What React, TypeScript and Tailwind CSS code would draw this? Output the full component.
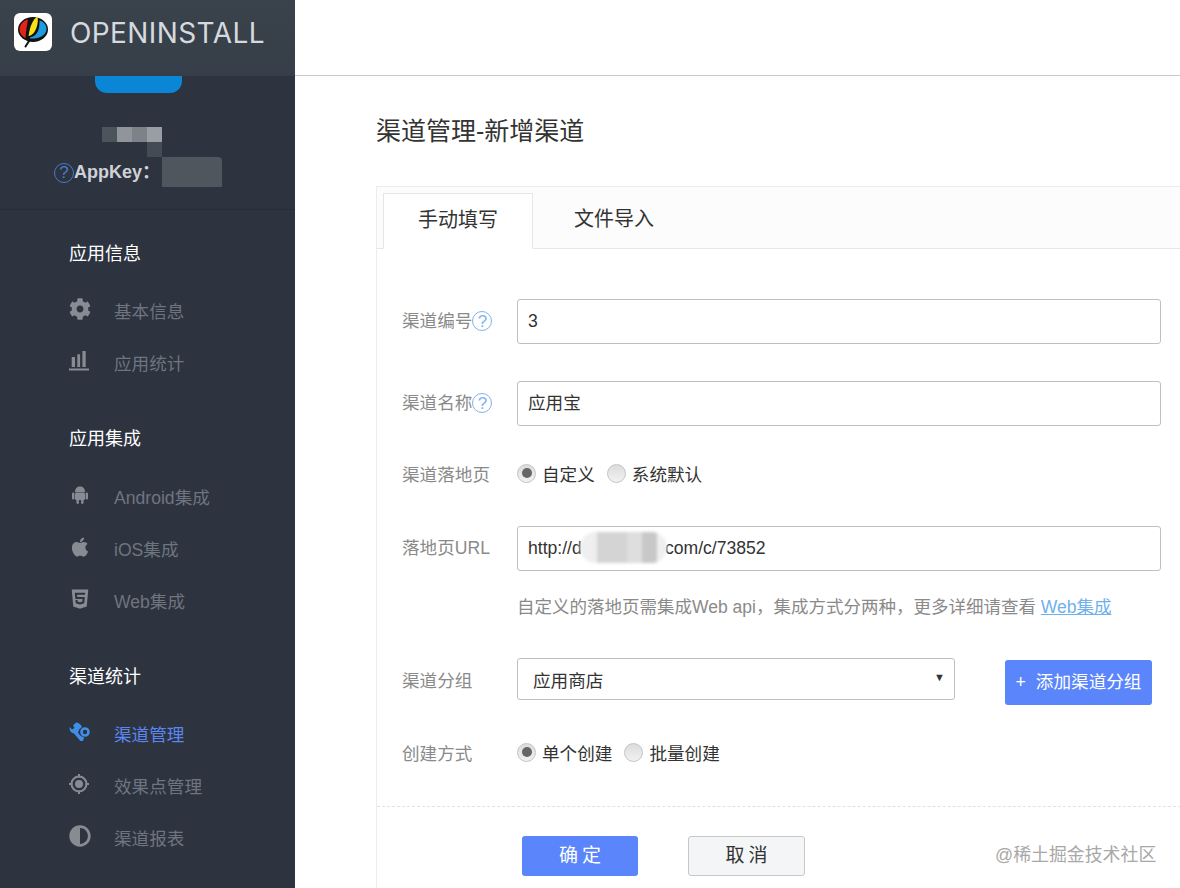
import { FaAdjust, FaApple, FaCog, FaHtml5 } from "react-icons/fa";
import type { ReactNode } from "react";

const font = "font-['Liberation_Sans','Noto_Sans_CJK_SC',sans-serif]";

function Logo() {
  return (
    <div className="w-[38px] h-[38px] bg-white rounded-md shrink-0">
      <svg viewBox="0 0 38 38" className="w-[38px] h-[38px]">
        <ellipse cx="19" cy="16.500" rx="15" ry="12.500" fill="#111" />
        <path d="M17 25L11.500 33.500" stroke="#111" strokeWidth="2" strokeLinecap="round" />
        <path d="M14 6.500C9 7.500 5.500 12 5.500 17c.5 4 3.500 7 6 8 .5-7 1.500-13 2.500-18.500z" fill="#e2231a" />
        <path d="M23.500 3.500C19 6 16 13 14.500 23c4-.5 7-4.500 8.500-10 1-4 1-7 .5-9.500z" fill="#f7e117" />
        <path d="M25.500 7.500c4.500 1 7.500 5 7 9.500-1 5.500-7.500 9-16.500 8.500l.5-1.500c5-.5 8-5 8.800-11 .2-2 .2-3.500.2-5.500z" fill="#1c9be0" />
      </svg>
    </div>
  );
}

function BarsIcon() {
  return (
    <svg viewBox="0 0 20 20" className="w-5 h-5" fill="currentColor">
      <rect x="2.700" y="6" width="3.300" height="10" />
      <rect x="8.300" y="3.300" width="2.800" height="12.700" />
      <rect x="13.400" y="0" width="3.300" height="16" />
      <rect x="0" y="17.500" width="20" height="2" />
    </svg>
  );
}

function AndroidIcon() {
  return (
    <svg viewBox="0 0 16 18" className="w-4 h-[18px] ml-[3px]" fill="currentColor">
      <path d="M3 6C3 2.500 5 .5 8 .5s5 2 5 5.500z" />
      <rect x="3" y="6.600" width="10" height="7.400" rx="1" />
      <rect x="0" y="6.500" width="2.400" height="7" rx="1.200" />
      <rect x="13.600" y="6.500" width="2.400" height="7" rx="1.200" />
      <rect x="4.500" y="13" width="2.400" height="5" rx="1.200" />
      <rect x="9.100" y="13" width="2.400" height="5" rx="1.200" />
    </svg>
  );
}

function WrenchIcon() {
  return (
    <svg viewBox="0 0 22 20" className="w-[22px] h-5" fill="currentColor">
      <path d="M7 .5L4 3.500 5.500 6 3 7.500.8 5C0 9 2.500 11 5 11.500l6 7c1 1 3 .5 3.500-.5l.5-2.500c-2-.5-5-2.500-6-5L10.500 7 13 5C11.500 2 9.500.5 7 .5z" />
      <circle cx="16" cy="10" r="3.500" fill="none" stroke="currentColor" strokeWidth="2.600" />
    </svg>
  );
}

function TargetIcon() {
  return (
    <svg viewBox="0 0 20 20" className="w-5 h-5" fill="currentColor">
      <circle cx="10" cy="10" r="7.500" fill="none" stroke="currentColor" strokeWidth="2" />
      <circle cx="10" cy="10" r="4" />
      <rect x="9" y="0" width="2" height="3.500" />
      <rect x="9" y="16.500" width="2" height="3.500" />
      <rect x="0" y="9" width="3.500" height="2" />
      <rect x="16.500" y="9" width="3.500" height="2" />
    </svg>
  );
}

function Help({ dark }: { dark?: boolean }) {
  return (
    <span
      className={`inline-flex items-center justify-center w-5 h-5 rounded-full border-[1.5px] text-[17px] leading-none shrink-0 ${
        dark ? "border-[#4a78c8] text-[#4a78c8]" : "border-[#7fb2ee] text-[#7fb2ee]"
      }`}
    >
      ?
    </span>
  );
}

function NavItem({ icon, label, active }: { icon: ReactNode; label: string; active?: boolean }) {
  return (
    <div className={`h-[52px] flex items-center pl-[69px] ${active ? "text-[#5b86f0]" : "text-[#6f757e]"}`}>
      <span className={`w-[45px] flex -mt-1.5 text-[22px] ${active ? "text-[#3f8fe8]" : "text-[#878c93]"}`}>{icon}</span>
      <span className="text-[17.6px]">{label}</span>
    </div>
  );
}

function Sidebar() {
  return (
    <aside className="w-[295px] shrink-0 h-full bg-[#2d333f] flex flex-col overflow-hidden">
      <div className="h-[76px] shrink-0 bg-gradient-to-b from-[#3a424b] to-[#363e49] flex items-start pt-[13px] pl-[14px] gap-[18px]">
        <Logo />
        <span className="h-[38px] leading-[40px] text-[28px] font-['Inter',sans-serif] font-normal tracking-[0.4px] text-[#d5dade]">OPENINSTALL</span>
      </div>
      <div className="h-[17px] w-[87px] ml-[95px] bg-[#0b86d6] rounded-b-xl shrink-0" />
      <div className="relative h-[117px] shrink-0 border-b border-[#272c36]">
        <div className="absolute left-[102px] top-[34px] flex blur-[0.5px]">
          <span className="w-[15px] h-[15px] bg-[#4c545c]" />
          <span className="w-[15px] h-[15px] bg-[#91949b]" />
          <span className="w-[15px] h-[15px] bg-[#7d8188]" />
          <span className="w-[15px] h-[15px] bg-[#9a9da4]" />
        </div>
        <div className="absolute left-[147px] top-[49px] w-[15px] h-[15px] bg-[#454b54]" />
        <div className="absolute left-[162px] top-[64px] w-[60px] h-[30px] bg-[#50565e] rounded-tr" />
        <div className="pt-[66px] pl-[54px] flex items-center">
          <Help dark />
          <span className="text-[18px] font-bold text-[#cfd2d6]">AppKey：</span>
        </div>
      </div>
      <div className="pt-[32px]">
        <h3 className="pl-[69px] h-6 leading-6 text-[18px] text-white">应用信息</h3>
        <div className="mt-[20px]">
          <NavItem icon={<FaCog />} label="基本信息" />
          <NavItem icon={<BarsIcon />} label="应用统计" />
        </div>
      </div>
      <div className="mt-[37px]">
        <h3 className="pl-[69px] h-6 leading-6 text-[18px] text-white">应用集成</h3>
        <div className="mt-[21px]">
          <NavItem icon={<AndroidIcon />} label="Android集成" />
          <NavItem icon={<FaApple />} label="iOS集成" />
          <NavItem icon={<FaHtml5 />} label="Web集成" />
        </div>
      </div>
      <div className="mt-[37px]">
        <h3 className="pl-[69px] h-6 leading-6 text-[18px] text-white">渠道统计</h3>
        <div className="mt-[20px]">
          <NavItem active icon={<WrenchIcon />} label="渠道管理" />
          <NavItem icon={<TargetIcon />} label="效果点管理" />
          <NavItem icon={<FaAdjust />} label="渠道报表" />
        </div>
      </div>
    </aside>
  );
}

function Label({ children }: { children: ReactNode }) {
  return <div className="w-[115px] shrink-0 flex items-center text-[17.6px] text-[#8a8a8a]">{children}</div>;
}

function TextRow({ label, value, help, cjk }: { label: string; value: string; help?: boolean; cjk?: boolean }) {
  return (
    <div className="flex items-center">
      <Label>
        {label}
        {help && <Help />}
      </Label>
      <input
        readOnly
        value={value}
        className={`w-[644px] h-[45px] px-[10px] border border-[#bfbfbf] rounded-[3px] text-[17.6px] text-[#333] outline-none ${
          cjk ? "pb-[4px]" : ""
        }`}
      />
    </div>
  );
}

function Radio({ label, checked }: { label: string; checked?: boolean }) {
  return (
    <span className="flex items-center gap-[6px] text-[17.6px] text-[#333]">
      <span className="w-[19px] h-[19px] rounded-full border border-[#c4c4c4] bg-gradient-to-b from-[#dcdcdc] to-[#f2f2f2] flex items-center justify-center -mt-1">
        {checked && <span className="w-[10px] h-[10px] rounded-full bg-[#666]" />}
      </span>
      {label}
    </span>
  );
}

function Form() {
  return (
    <div className="px-[25px] pt-[50px]">
      <TextRow label="渠道编号" value="3" help />
      <div className="mt-[37px]">
        <TextRow label="渠道名称" value="应用宝" help cjk />
      </div>
      <div className="flex items-center h-6 mt-[37px]">
        <Label>渠道落地页</Label>
        <div className="flex items-center gap-3">
          <Radio label="自定义" checked />
          <Radio label="系统默认" />
        </div>
      </div>
      <div className="relative mt-[39px]">
        <TextRow label="落地页URL" value="http://d                 com/c/73852" />
        <div className="absolute left-[178px] top-[6px] w-[87px] h-[31px] rounded-2xl overflow-hidden flex blur-[1.5px]">
          <span className="w-[17px] bg-[#efefef]" />
          <span className="w-[30px] bg-[#d4d4d4]" />
          <span className="w-[15px] bg-[#dedede]" />
          <span className="w-[15px] bg-[#c8c8c8]" />
          <span className="w-[10px] bg-[#efefef]" />
        </div>
      </div>
      <p className="ml-[115px] mt-6 h-6 leading-6 text-[17.5px] text-[#8a8a8a] whitespace-nowrap">
        自定义的落地页需集成Web api，集成方式分两种，更多详细请查看{" "}
        <a className="text-[#6fb1ee] underline">Web集成</a>
      </p>
      <div className="flex items-start mt-[39px]">
        <Label>
          <span className="h-[47px] flex items-center">渠道分组</span>
        </Label>
        <div className="w-[438px] h-[42px] border border-[#bfbfbf] rounded-[3px] pl-[15px] pr-[9px] flex items-center justify-between text-[17.6px] text-[#333]">
          <span className="pt-[5px]">应用商店</span>
          <span className="text-[11px] text-[#333] -mt-1">▼</span>
        </div>
        <button className="ml-[50px] mt-[2px] w-[147px] h-[45px] bg-[#5b86fb] rounded-[3px] text-white text-[17.6px]">
          <span className="mr-[10px]">+</span>添加渠道分组
        </button>
      </div>
      <div className="flex items-center h-6 mt-[37px]">
        <Label>创建方式</Label>
        <div className="flex items-center gap-3">
          <Radio label="单个创建" checked />
          <Radio label="批量创建" />
        </div>
      </div>
    </div>
  );
}

export default function App() {
  return (
    <div className={`${font} relative w-[1180px] h-[888px] flex overflow-hidden bg-white`}>
      <Sidebar />
      <main className="flex-1 min-w-0">
        <div className="h-[76px] border-b border-[#c9c9c9]" />
        <div className="pl-[81px]">
          <h1 className="h-[110px] pt-[37px] leading-[36px] text-[25px] text-[#333]">渠道管理-新增渠道</h1>
          <div className="w-[830px] h-[720px] border-l border-t border-[#ececec]">
            <div className="h-[62px] bg-[#fcfcfc] border-b border-[#e6e6e6] flex items-end pl-[6px]">
              <div className="w-[150px] h-[56px] pb-[2px] -mb-px bg-white border border-[#e6e6e6] border-b-white flex items-center justify-center text-[20px] text-[#333]">
                手动填写
              </div>
              <div className="w-[162px] h-[56px] pb-[2px] flex items-center justify-center text-[20px] text-[#333]">文件导入</div>
            </div>
            <Form />
            <div className="mt-10 border-t border-dashed border-[#e2e2e2] pt-[29px] pl-[145px] flex gap-[50px]">
              <button className="w-[116px] h-10 pl-1 bg-[#5b86fb] rounded-[3px] text-white text-[19px] tracking-[4px]">确定</button>
              <button className="w-[117px] h-10 pl-1 bg-[#f4f5f6] border border-[#c8c8c8] rounded-[3px] text-[#333] text-[19px] tracking-[4px]">取消</button>
            </div>
          </div>
        </div>
      </main>
      <span className="absolute left-[995px] top-[842px] text-[17.9px] text-[#a8a8a8]">@稀土掘金技术社区</span>
    </div>
  );
}
